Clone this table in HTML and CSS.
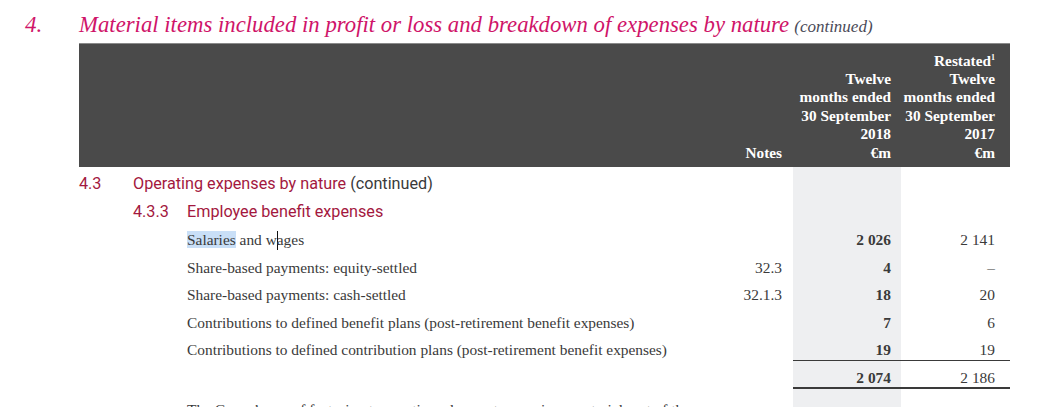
FILE: index.html
```html
<!DOCTYPE html>
<html>
<head>
<meta charset="utf-8">
<link rel="stylesheet" href="styles.css">
</head>
<body>
<div class="page">
  <h1 class="title"><span class="t-num">4.</span><span class="t-text">Material items included in profit or loss and breakdown of expenses by nature</span> <span class="t-cont">(continued)</span></h1>
  <div class="table">
    <div class="row head">
      <div class="c-label"></div>
      <div class="c-notes">Notes</div>
      <div class="c-y1">Twelve<br>months ended<br>30 September<br>2018<br>€m</div>
      <div class="c-y2">Restated<sup>1</sup><br>Twelve<br>months ended<br>30 September<br>2017<br>€m</div>
    </div>
    <div class="row sec">
      <div class="c-label span2"><span class="h-num">4.3</span><span class="h-red">Operating expenses by nature</span>&nbsp;<span class="h-gray">(continued)</span></div>
      <div class="c-y1 shade"></div>
      <div class="c-y2"></div>
    </div>
    <div class="row sec">
      <div class="c-label span2 sub"><span class="h-num">4.3.3</span><span class="h-red">Employee benefit expenses</span></div>
      <div class="c-y1 shade"></div>
      <div class="c-y2"></div>
    </div>
    <div class="row data">
      <div class="c-label item"><span class="sel">Salaries</span> and w<span class="caret"></span>ages</div>
      <div class="c-notes"></div>
      <div class="c-y1 shade b">2 026</div>
      <div class="c-y2">2 141</div>
    </div>
    <div class="row data">
      <div class="c-label item">Share-based payments: equity-settled</div>
      <div class="c-notes">32.3</div>
      <div class="c-y1 shade b">4</div>
      <div class="c-y2">–</div>
    </div>
    <div class="row data">
      <div class="c-label item">Share-based payments: cash-settled</div>
      <div class="c-notes">32.1.3</div>
      <div class="c-y1 shade b">18</div>
      <div class="c-y2">20</div>
    </div>
    <div class="row data">
      <div class="c-label item">Contributions to defined benefit plans (post-retirement benefit expenses)</div>
      <div class="c-notes"></div>
      <div class="c-y1 shade b">7</div>
      <div class="c-y2">6</div>
    </div>
    <div class="row data">
      <div class="c-label item">Contributions to defined contribution plans (post-retirement benefit expenses)</div>
      <div class="c-notes"></div>
      <div class="c-y1 shade b rule">19</div>
      <div class="c-y2 rule">19</div>
    </div>
    <div class="row data total">
      <div class="c-label item"></div>
      <div class="c-notes"></div>
      <div class="c-y1 shade b thick">2 074</div>
      <div class="c-y2 thick">2 186</div>
    </div>
    <div class="row tail">
      <div class="c-label item para">The Group’s use of factoring transactions does not comprise a material part of the</div>
      <div class="c-notes"></div>
      <div class="c-y1 shade"></div>
      <div class="c-y2"></div>
    </div>
  </div>
</div>
</body>
</html>
```
FILE: styles.css
```css
html, body {
  margin: 0;
  padding: 0;
  background: #ffffff;
}
body {
  overflow: hidden;
}
.page {
  width: 1048px;
}
.title {
  margin: 0;
  height: 43px;
  box-sizing: border-box;
  padding: 12px 0 0 25px;
  display: flex;
  align-items: baseline;
  font-family: "Liberation Serif", serif;
  font-style: italic;
  font-weight: normal;
  white-space: nowrap;
}
.t-num {
  width: 54px;
  font-size: 23px;
  color: #cf1469;
}
.t-text {
  font-size: 22.75px;
  color: #cf1469;
  margin-right: 5px;
}
.t-cont {
  font-size: 17px;
  color: #4a4a58;
}
.table {
  margin-left: 79px;
  width: 931px;
  font-family: "Liberation Serif", serif;
  font-size: 15.4px;
  color: #3a3a3a;
}
.row {
  display: grid;
  grid-template-columns: 1fr 103px 108px 109px;
}
.c-notes {
  text-align: right;
  padding-right: 11px;
}
.c-y1 {
  text-align: right;
  padding-right: 10px;
}
.c-y2 {
  text-align: right;
  padding-right: 15px;
}
.head {
  background: #4a4a4a;
  border-top: 1px solid #8a8a8a;
  height: 124px;
  box-sizing: border-box;
  padding: 7px 0 5px;
  color: #ffffff;
  font-weight: bold;
  font-size: 15.3px;
  line-height: 18.4px;
  align-items: end;
}
.head sup {
  font-size: 8px;
  line-height: 0;
  vertical-align: 6px;
}
.sec {
  height: 28px;
  line-height: 18px;
}
.sec .c-label {
  padding-top: 8px;
  font-family: Roboto, sans-serif;
  font-size: 16.2px;
  display: flex;
}
.span2 {
  grid-column: 1 / span 2;
}
.sub {
  padding-left: 54px;
}
.h-num {
  width: 54px;
  color: #a3183e;
}
.h-red {
  color: #a3183e;
}
.h-gray {
  color: #3a3a3a;
}
.data {
  height: 27.5px;
  line-height: 18px;
}
.data > div {
  padding-top: 8px;
  box-sizing: border-box;
}
.item {
  padding-left: 108px;
  white-space: nowrap;
}
.shade {
  background: #eeeff1;
}
.b {
  font-weight: bold;
}
.rule {
  border-bottom: 1px solid #3a3a3a;
}
.thick {
  border-bottom: 2.5px solid #3a3a3a;
}
.total {
  height: 28.5px;
}
.tail {
  height: 60px;
}
.tail .para {
  padding-top: 12px;
  line-height: 18px;
}
.sel {
  background: #c9dff7;
}
.caret {
  display: inline-block;
  width: 1px;
  height: 19px;
  background: #111;
  vertical-align: -5px;
  margin-right: -1px;
}
```
